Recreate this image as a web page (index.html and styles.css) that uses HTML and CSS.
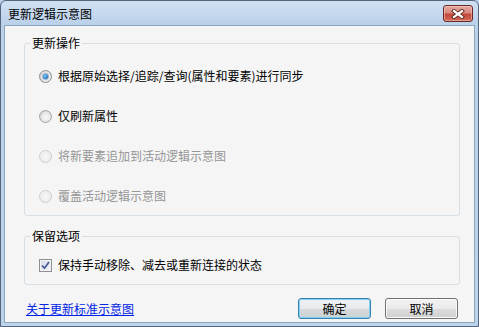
FILE: index.html
```html
<!DOCTYPE html>
<html lang="zh-CN">
<head>
<meta charset="utf-8">
<title>更新逻辑示意图</title>
<link rel="stylesheet" href="styles.css">
</head>
<body>
<div class="window">
  <div class="titlebar">
    <span class="title">更新逻辑示意图</span>
    <button class="close" aria-label="关闭">
      <svg width="14" height="10" viewBox="0 0 14 10">
        <path d="M3 2 L11 8 M11 2 L3 8" stroke="#5a2520" stroke-width="4" stroke-linecap="square" fill="none"/>
        <path d="M3 2 L11 8 M11 2 L3 8" stroke="#ffffff" stroke-width="2.2" stroke-linecap="square" fill="none"/>
      </svg>
    </button>
  </div>
  <div class="client">
    <fieldset class="group">
      <legend>更新操作</legend>
      <div class="options">
        <label class="row"><span class="radio checked"></span><span class="text">根据原始选择/追踪/查询(属性和要素)进行同步</span></label>
        <label class="row"><span class="radio"></span><span class="text">仅刷新属性</span></label>
        <label class="row disabled"><span class="radio"></span><span class="text">将新要素追加到活动逻辑示意图</span></label>
        <label class="row disabled"><span class="radio"></span><span class="text">覆盖活动逻辑示意图</span></label>
      </div>
    </fieldset>
    <fieldset class="group group-keep">
      <legend>保留选项</legend>
      <div class="options options-keep">
        <label class="row">
          <span class="check">
            <svg width="9" height="9" viewBox="0 0 9 9"><path d="M1 4.5 L3.5 7.2 L8 1" stroke="#4a5f95" stroke-width="1.8" fill="none"/></svg>
          </span>
          <span class="text">保持手动移除、减去或重新连接的状态</span>
        </label>
      </div>
    </fieldset>
    <div class="footer">
      <a class="link" href="#">关于更新标准示意图</a>
      <div class="buttons">
        <button class="btn default">确定</button>
        <button class="btn">取消</button>
      </div>
    </div>
  </div>
</div>
</body>
</html>
```

FILE: styles.css
```css
* { box-sizing: border-box; }
html, body { margin: 0; padding: 0; }
body {
  width: 479px;
  height: 327px;
  overflow: hidden;
  font-family: "Noto Sans CJK SC", "Liberation Sans", sans-serif;
  font-size: 12px;
  color: #000;
  background: #b9d1ea;
}
.window {
  width: 479px;
  height: 327px;
  border: 1px solid #55657c;
  border-radius: 6px 6px 0 0;
  background: linear-gradient(#d0e0f3, #bad1ea 24px, #bcd3ec);
  display: flex;
  flex-direction: column;
  padding: 0 3px 3px;
}
.titlebar {
  height: 24px;
  flex: none;
  display: flex;
  align-items: center;
  justify-content: space-between;
  padding: 0 2px 0 4px;
}
.title { line-height: 14px; margin-top: 1px; }
.close {
  width: 30px;
  height: 17px;
  margin-top: 1px;
  padding: 0;
  border: 1px solid #6a2a24;
  border-radius: 3px;
  background: linear-gradient(#e5a89f, #d7897e 45%, #c5493c 55%, #cf6a5a);
  box-shadow: inset 0 0 0 1px rgba(255,220,210,.45);
  display: flex;
  align-items: center;
  justify-content: center;
}
.client {
  flex: 1;
  border: 1px solid #8ea5c0;
  background: #f5f5f5;
  display: flex;
  flex-direction: column;
  padding: 10px 14px 0 19px;
}
.group {
  margin: 0;
  padding: 0;
  border: 1px solid #d6dfe6;
  border-radius: 3px;
  min-width: 0;
}
.group legend {
  margin-left: 5px;
  padding: 0 2px;
  line-height: 14px;
  height: 14px;
}
.group-keep { margin-top: 13px; }
.options {
  display: flex;
  flex-direction: column;
  gap: 20px;
  padding: 16px 0 9px 14px;
}
.options-keep { padding-top: 12px; }
.row {
  height: 20px;
  display: flex;
  align-items: center;
  gap: 6px;
}
.row .text { line-height: 14px; }
.row.disabled { color: #969696; }
.radio {
  width: 13px;
  height: 13px;
  flex: none;
  border-radius: 50%;
  border: 1px solid #a2a4a6;
  background: radial-gradient(circle at 55% 55%, #f8f8f8 0, #ececec 40%, #d8d8d8 70%, #f2f2f2 100%);
  display: flex;
  align-items: center;
  justify-content: center;
}
.radio.checked { border-color: #8b8d90; }
.radio.checked::after {
  content: "";
  width: 5px;
  height: 5px;
  border-radius: 50%;
  background: radial-gradient(circle at 40% 40%, #8fd3ff 0, #2b7fd0 55%, #184f8c 100%);
  box-shadow: 0 0 0 1px rgba(24,79,140,.35);
}
.disabled .radio {
  border-color: #cbcccd;
  background: radial-gradient(circle, #f8f8f8 0, #eeeeee 60%, #f6f6f6 100%);
}
.check {
  width: 13px;
  height: 13px;
  flex: none;
  border: 1px solid #8e8f90;
  background: linear-gradient(135deg, #d6dbe6, #f2f4f8);
  box-shadow: inset 0 0 0 1px #f4f4f4;
  display: flex;
  align-items: center;
  justify-content: center;
}
.footer {
  display: flex;
  align-items: center;
  justify-content: space-between;
  margin-top: 13px;
  padding: 0 2px;
}
.link {
  color: #0024e6;
  text-decoration: underline;
  line-height: 14px;
}
.buttons { display: flex; gap: 14px; }
.btn {
  width: 73px;
  height: 21px;
  padding: 0;
  font-family: inherit;
  font-size: 12px;
  color: #000;
  border: 1px solid #707070;
  border-radius: 3px;
  background: linear-gradient(#f2f2f2 0%, #ebebeb 50%, #dddddd 51%, #cfcfcf 100%);
  box-shadow: inset 0 0 0 1px #fbfbfb;
  line-height: 14px;
}
.btn.default {
  border-color: #3c7fb1;
  background: linear-gradient(#eef2f4 0%, #e6eaec 50%, #d6dadc 51%, #cbd0d3 100%);
  box-shadow: inset 0 0 0 1px #7fd3f3;
}
```
